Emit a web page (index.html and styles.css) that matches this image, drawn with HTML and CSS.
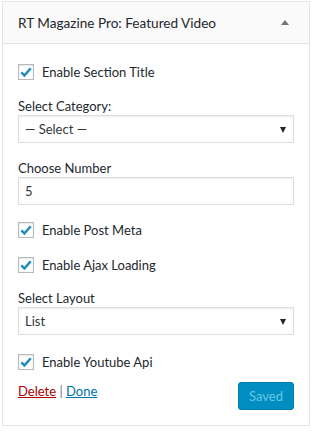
FILE: index.html
```html
<!DOCTYPE html>
<html>
<head>
<meta charset="utf-8">
<link rel="stylesheet" href="styles.css">
</head>
<body>
<div class="widget">
  <div class="widget-top">
    <h3 class="widget-title">RT Magazine Pro: Featured Video</h3>
    <span class="toggle"></span>
  </div>
  <div class="widget-inside">
    <label class="check first">
      <span class="box"><svg width="14" height="14" viewBox="0 0 14 14"><path d="M2.3 7.4 L5.4 10.4 L11.8 3.2" fill="none" stroke="#1e8cbe" stroke-width="2.4"/></svg></span>
      <span>Enable Section Title</span>
    </label>

    <div class="field f-cat">
      <div class="lbl">Select Category:</div>
      <div class="select"><span>— Select —</span></div>
    </div>

    <div class="field f-num">
      <div class="lbl">Choose Number</div>
      <div class="input">5</div>
    </div>

    <label class="check c-meta">
      <span class="box"><svg width="14" height="14" viewBox="0 0 14 14"><path d="M2.3 7.4 L5.4 10.4 L11.8 3.2" fill="none" stroke="#1e8cbe" stroke-width="2.4"/></svg></span>
      <span>Enable Post Meta</span>
    </label>

    <label class="check c-ajax">
      <span class="box"><svg width="14" height="14" viewBox="0 0 14 14"><path d="M2.3 7.4 L5.4 10.4 L11.8 3.2" fill="none" stroke="#1e8cbe" stroke-width="2.4"/></svg></span>
      <span>Enable Ajax Loading</span>
    </label>

    <div class="field f-layout">
      <div class="lbl">Select Layout</div>
      <div class="select"><span>List</span></div>
    </div>

    <label class="check c-yt">
      <span class="box"><svg width="14" height="14" viewBox="0 0 14 14"><path d="M2.3 7.4 L5.4 10.4 L11.8 3.2" fill="none" stroke="#1e8cbe" stroke-width="2.4"/></svg></span>
      <span>Enable Youtube Api</span>
    </label>

    <div class="actions">
      <div class="links"><a class="del">Delete</a> <span class="sep">|</span> <a class="done">Done</a></div>
      <div class="btn">Saved</div>
    </div>
  </div>
</div>
</body>
</html>
```

FILE: styles.css
```css
html, body {
  margin: 0;
  padding: 0;
  background: #fff;
}
body {
  font-family: "Lato", "Noto Sans", sans-serif;
  font-size: 13px;
  color: #23282d;
}
.widget {
  margin: 1px 0 0 2px;
  width: 306px;
  border: 1px solid #e5e5e5;
  background: #fff;
  box-shadow: 0 1px 1px rgba(0,0,0,.04);
}
.widget-top {
  height: 41px;
  background: #fafafa;
  border-bottom: 1px solid #e5e5e5;
  display: flex;
  align-items: center;
  justify-content: space-between;
  padding: 0 20px 0 15px;
}
.widget-title {
  margin: 0;
  font-size: 13.6px;
  font-weight: 400;
  color: #23282d;
  line-height: 18px;
}
.toggle {
  width: 0;
  height: 0;
  border-left: 4px solid transparent;
  border-right: 4px solid transparent;
  border-bottom: 5px solid #72777c;
}
.widget-inside {
  padding: 0 15px 15px;
  display: flex;
  flex-direction: column;
}
.check {
  display: flex;
  align-items: center;
  gap: 8px;
  height: 16px;
  line-height: 16px;
}
.check.first { margin-top: 20px; }
.check.c-meta { margin-top: 17px; }
.check.c-ajax { margin-top: 19px; }
.check.c-yt { margin-top: 19px; }
.box {
  width: 14px;
  height: 14px;
  border: 1px solid #b4b9be;
  background: #fff;
  box-shadow: inset 0 1px 2px rgba(0,0,0,.1);
  display: flex;
  align-items: center;
  justify-content: center;
  flex: none;
}
.box svg { display: block; }
.field { display: flex; flex-direction: column; }
.f-cat { margin-top: 18px; }
.f-num { margin-top: 17px; }
.f-layout { margin-top: 17px; }
.lbl {
  line-height: 17px;
  height: 17px;
}
.select, .input {
  height: 26px;
  border: 1px solid #ddd;
  box-shadow: inset 0 1px 2px rgba(0,0,0,.07);
  background: #fff;
  display: flex;
  align-items: center;
  padding: 0 6px;
  color: #32373c;
  position: relative;
}
.select::after {
  content: "";
  position: absolute;
  right: 7px;
  top: 11px;
  border-left: 3.5px solid transparent;
  border-right: 3.5px solid transparent;
  border-top: 6px solid #23282d;
}
.actions {
  margin-top: 12px;
  display: flex;
  justify-content: space-between;
  align-items: flex-start;
}
.links { line-height: 18px; height: 18px; color: #72777c; }
.del { color: #a00; text-decoration: underline; }
.done { color: #0073aa; text-decoration: underline; }
.btn {
  width: 54px;
  height: 26px;
  border: 1px solid #007cb2;
  border-radius: 3px;
  background: #008ec2;
  color: #66c6e4;
  display: flex;
  align-items: center;
  justify-content: center;
  font-size: 13px;
}
```
